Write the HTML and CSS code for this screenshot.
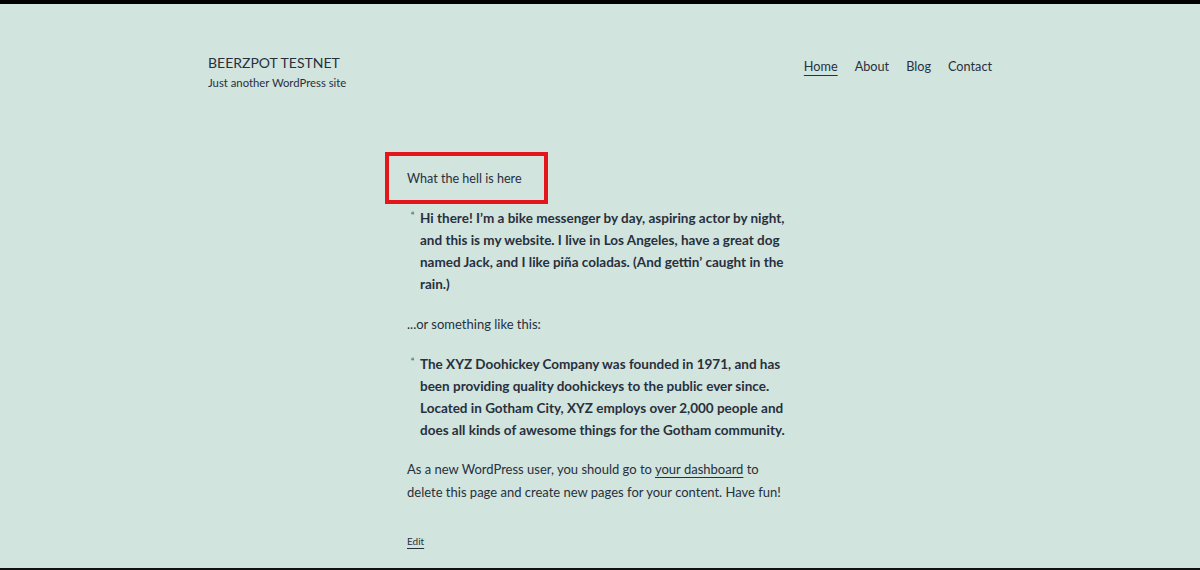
FILE: index.html
```html
<!DOCTYPE html>
<html lang="en">
<head>
  <meta charset="UTF-8">
  <title>BEERZPOT TESTNET</title>
  <link rel="stylesheet" href="styles.css">
</head>
<body>

<header class="site-header">
  <div class="branding">
    <div class="site-title">BEERZPOT TESTNET</div>
    <div class="site-desc">Just another WordPress site</div>
  </div>
  <nav class="menu">
    <a href="#" class="current">Home</a>
    <a href="#">About</a>
    <a href="#">Blog</a>
    <a href="#">Contact</a>
  </nav>
</header>

<main class="entry">
  <div class="marked">
    <p>What the hell is here</p>
  </div>

  <blockquote>
    <p>Hi there! I’m a bike messenger by day, aspiring actor by night, and this is my website. I live in Los Angeles, have a great dog named Jack, and I like piña coladas. (And gettin’ caught in the rain.)</p>
  </blockquote>

  <p>...or something like this:</p>

  <blockquote class="tight">
    <p>The XYZ Doohickey Company was founded in 1971, and has been providing quality doohickeys to the public ever since. Located in Gotham City, XYZ employs over 2,000 people and does all kinds of awesome things for the Gotham community.</p>
  </blockquote>

  <p>As a new WordPress user, you should go to <a href="#">your dashboard</a> to delete this page and create new pages for your content. Have fun!</p>

  <div class="edit-link"><a href="#">Edit</a></div>
</main>

</body>
</html>
```

FILE: styles.css
```css
html, body { height: 100%; }
body {
  margin: 0;
  box-sizing: border-box;
  background-color: #d1e4dd;
  color: #28303d;
  font-family: Lato, "Open Sans", sans-serif;
  border-top: 4px solid #000;
  border-bottom: 2px solid #111;
  overflow: hidden;
}
a { color: #28303d; }

.site-header {
  width: 784px;
  margin: 0 auto;
  padding-top: 49px;
  display: flex;
  justify-content: space-between;
  align-items: flex-start;
}
.site-title {
  font-size: 14px;
  line-height: 19px;
}
.site-desc {
  font-size: 11.3px;
  line-height: 16px;
  margin-top: 3px;
}
.menu {
  display: flex;
  gap: 17px;
  padding-top: 4px;
  font-size: 12.7px;
  line-height: 18px;
}
.menu a { text-decoration: none; }
.menu a.current {
  text-decoration: underline;
  text-underline-offset: 4px;
}

.entry {
  width: 386px;
  margin: 0 auto;
  padding-top: 61px;
  font-size: 13px;
  line-height: 23px;
}
.entry p { margin: 0 0 17px; }
.marked {
  border: 4px solid #e3171b;
  margin-left: -22px;
  width: 137px;
  padding: 11px 0 10px 18px;
  margin-bottom: 3px;
}
.marked p {
  margin: 0;
  font-size: 12.6px;
}
blockquote {
  margin: 0 0 18px;
  padding-left: 13px;
  position: relative;
  font-weight: 700;
  font-size: 13.5px;
  line-height: 22px;
}
blockquote.tight { margin-bottom: 16px; }
blockquote p { margin: 0; }
blockquote::before {
  content: "\201C";
  position: absolute;
  left: 4px;
  top: -2px;
  font-size: 9px;
  font-weight: 400;
}
.entry a { text-underline-offset: 3px; }
.edit-link {
  font-size: 10px;
  line-height: 14px;
  padding-top: 13px;
}
```
